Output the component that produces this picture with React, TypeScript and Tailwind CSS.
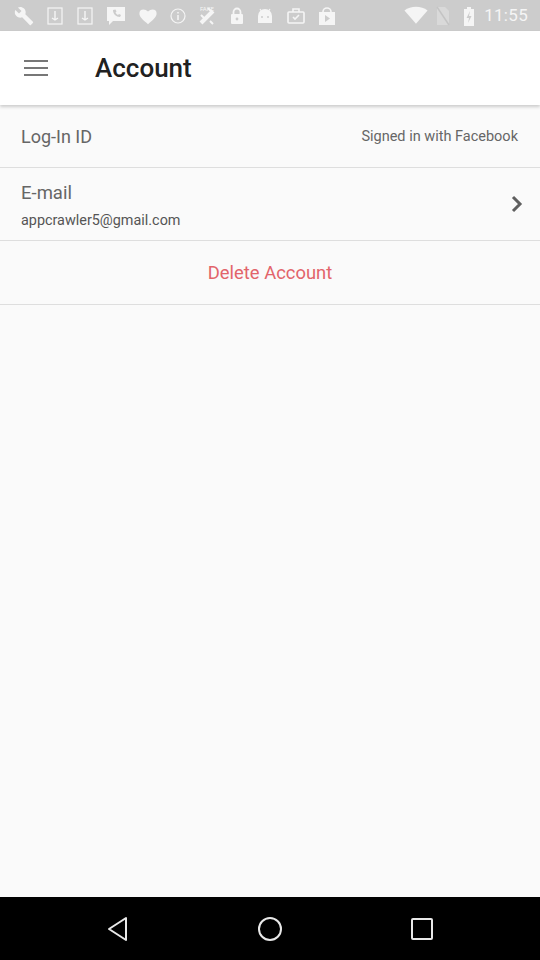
import React from 'react';

function StatusIcons() {
  const c = '#f5f5f5';
  return (
    <div className="flex items-center gap-[12px] pl-[14px]">
      {/* wrench */}
      <svg width="20" height="20" viewBox="0 0 24 24"><path fill={c} d="M22.7 19l-9.1-9.1c.9-2.3.4-5-1.5-6.9-2-2-5-2.4-7.4-1.3L9 6 6 9 1.6 4.7C.4 7.1.9 10.1 2.9 12.1c1.9 1.9 4.6 2.4 6.9 1.5l9.1 9.1c.4.4 1 .4 1.4 0l2.3-2.3c.5-.4.5-1.1.1-1.4z" /></svg>
      {/* sim cards */}
      <svg width="18" height="20" viewBox="0 0 18 20"><rect x="2" y="2" width="14" height="16" fill="none" stroke={c} strokeWidth="1.2" /><path d="M9 5v9M6 12l3 2 3-2" stroke={c} strokeWidth="1.4" fill="none" /></svg>
      <svg width="18" height="20" viewBox="0 0 18 20"><rect x="2" y="2" width="14" height="16" fill="none" stroke={c} strokeWidth="1.2" /><path d="M9 5v9M6 12l3 2 3-2" stroke={c} strokeWidth="1.4" fill="none" /></svg>
      {/* phone message */}
      <svg width="20" height="20" viewBox="0 0 20 20"><path fill={c} d="M1 1h18v14H7l-4 4v-4H1z" /><path d="M7 4c0 4 3 7 7 7l1-2-2-1-1 1c-1-.5-2-1.5-2.5-2.5l1-1-1-2z" fill="#cccccc" /></svg>
      {/* heart */}
      <svg width="20" height="18" viewBox="0 0 24 22"><path fill={c} d="M12 21l-1.5-1.3C5 15 1.5 12 1.5 8A5 5 0 016.5 3c1.8 0 3.8.9 5.5 2.6C13.7 3.9 15.7 3 17.5 3a5 5 0 015 5c0 4-3.5 7-9 11.7z" /></svg>
      {/* info */}
      <svg width="16" height="16" viewBox="0 0 16 16"><circle cx="8" cy="8" r="7" fill="none" stroke={c} strokeWidth="1.2" /><path d="M8 4v1.5M8 7v5" stroke={c} strokeWidth="1.5" /></svg>
      {/* satellite */}
      <svg width="20" height="22" viewBox="0 0 20 22"><text x="2" y="6" fontSize="6" fill={c} fontFamily="Roboto">FAKE</text><path d="M3 18l12-12" stroke={c} strokeWidth="4" /><path d="M3 10l4 4M10 3l4 4M12 16l3 3" stroke={c} strokeWidth="2" /></svg>
      {/* lock */}
      <svg width="14" height="18" viewBox="0 0 14 18"><rect x="1" y="7" width="12" height="10" rx="1" fill={c} /><path d="M3.5 7V5a3.5 3.5 0 017 0v2" stroke={c} strokeWidth="1.8" fill="none" /><circle cx="7" cy="12" r="1.4" fill="#cccccc" /></svg>
      {/* android */}
      <svg width="18" height="18" viewBox="0 0 18 18"><path d="M2 16V9a7 7 0 0114 0v7z" fill={c} /><path d="M4 2l2 3M14 2l-2 3" stroke={c} strokeWidth="1.2" /><circle cx="6" cy="10" r="1" fill="#cccccc" /><circle cx="12" cy="10" r="1" fill="#cccccc" /></svg>
      {/* briefcase check */}
      <svg width="20" height="20" viewBox="0 0 20 20"><rect x="2" y="6" width="16" height="11" rx="1" fill="none" stroke={c} strokeWidth="1.6" /><path d="M7 6V3h6v3" stroke={c} strokeWidth="1.6" fill="none" /><path d="M7 11l2 2 4-4" stroke={c} strokeWidth="1.6" fill="none" /></svg>
      {/* play bag */}
      <svg width="18" height="20" viewBox="0 0 18 20"><path d="M1 6h16v13H1z" fill={c} /><path d="M5 6a4 4 0 018 0" stroke={c} strokeWidth="1.6" fill="none" /><path d="M7 9v7l5-3.5z" fill="#cccccc" /></svg>
    </div>
  );
}

export default function App() {
  return (
    <div className="w-[540px] h-[960px] flex flex-col bg-[#fafafa]" style={{ fontFamily: 'Roboto, "Noto Sans", sans-serif' }}>
      {/* status bar */}
      <div className="h-[31px] bg-[#cccccc] flex items-center justify-between shrink-0">
        <StatusIcons />
        <div className="flex items-center pr-[12px]">
          <svg width="24" height="19" viewBox="0 0 26 20" className="mr-[8px]"><path d="M13 19L0.5 4.5C4 1.8 8.3 0.5 13 0.5s9 1.3 12.5 4z" fill="#f5f5f5" /></svg>
          <svg width="14" height="20" viewBox="0 0 14 20" className="mr-[14px]"><path d="M1 1h8l4 4v14H1z" fill="#d9d9d9" /><path d="M1 1l12 18" stroke="#c4c4c4" strokeWidth="1.5" /></svg>
          <svg width="10" height="20" viewBox="0 0 10 20" className="mr-[10px]"><path d="M3 1h4v2h3v17H0V3h3z" fill="#f5f5f5" /><path d="M6 5L2.5 12H5l-1 5 3.5-7H5z" fill="#cccccc" /></svg>
          <span className="text-[17px] text-[#f5f5f5] tracking-[0.3px]">11:55</span>
        </div>
      </div>

      {/* app bar */}
      <div className="h-[74px] bg-white flex items-center shrink-0 shadow-[0_2px_3px_rgba(0,0,0,0.18)] z-10">
        <div className="w-[72px] flex justify-center">
          <svg width="26" height="18" viewBox="0 0 26 18"><path d="M1 2h24M1 9h24M1 16h24" stroke="#777777" strokeWidth="2" /></svg>
        </div>
        <span className="ml-[23px] text-[26px] font-medium text-[#212121]">Account</span>
      </div>

      {/* content */}
      <div className="flex-1 flex flex-col">
        <div className="h-[63px] flex items-center justify-between pl-[21px] pr-[22px] border-b border-[#dedede]">
          <span className="text-[18px] text-[#666666]">Log-In ID</span>
          <span className="text-[14.5px] text-[#666666] pt-[2px]">Signed in with Facebook</span>
        </div>
        <div className="h-[73px] flex items-center justify-between pl-[21px] pr-[16px] border-b border-[#dedede]">
          <div className="flex flex-col pt-[3px]">
            <span className="text-[18.5px] text-[#666666] leading-[22px]">E-mail</span>
            <span className="text-[14.4px] text-[#555555] mt-[8px] leading-[18px]">appcrawler5@gmail.com</span>
          </div>
          <svg width="14" height="18" viewBox="0 0 14 18"><path d="M3 2l7 7-7 7" stroke="#5f5f5f" strokeWidth="3" fill="none" /></svg>
        </div>
        <div className="h-[64px] flex items-center justify-center border-b border-[#dedede]">
          <span className="text-[18.4px] text-[#e2646a]">Delete Account</span>
        </div>
      </div>

      {/* nav bar */}
      <div className="h-[63px] bg-black flex items-center justify-between px-[106px] shrink-0">
        <svg width="24" height="26" viewBox="0 0 24 26"><path d="M20 2v22L3 13z" stroke="#e8e8e8" strokeWidth="2" fill="none" strokeLinejoin="round" /></svg>
        <svg width="26" height="26" viewBox="0 0 26 26"><circle cx="13" cy="13" r="11" stroke="#e8e8e8" strokeWidth="2" fill="none" /></svg>
        <svg width="24" height="24" viewBox="0 0 24 24"><rect x="2" y="2" width="20" height="20" rx="1" stroke="#e8e8e8" strokeWidth="2" fill="none" /></svg>
      </div>
    </div>
  );
}
